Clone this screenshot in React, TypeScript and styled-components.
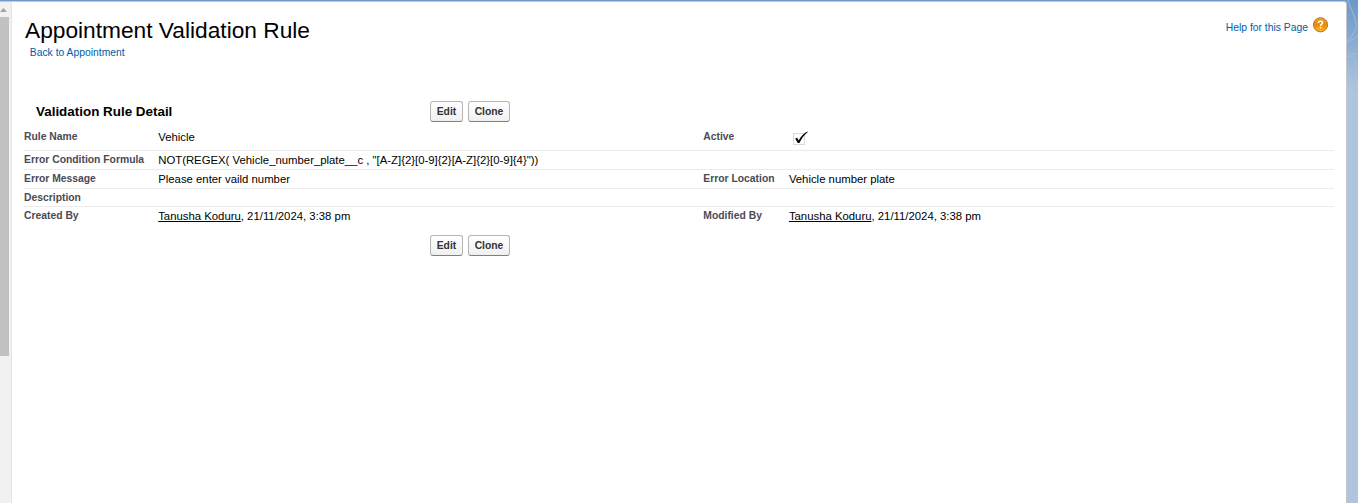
import React from "react";
import styled, { createGlobalStyle } from "styled-components";

const GlobalStyle = createGlobalStyle`
  html, body { margin: 0; padding: 0; overflow: hidden; }
  body { font-family: "Liberation Sans", Arial, sans-serif; font-size: 11.35px; color: #000; }
`;

const Page = styled.div`
  position: relative;
  display: flex;
  width: 1358px;
  height: 503px;
  box-sizing: border-box;
  padding-top: 1px;
  overflow: hidden;
  background: linear-gradient(#6b9ac8 0, #7fa5cf 30px, #afc4df 88px, #b0c4df 100%);
`;

const Backdrop = styled.svg`
  position: absolute;
  right: 0;
  top: 0;
`;

const Scrollbar = styled.div`
  width: 11px;
  flex: none;
  background: #f1f1f1;
  border-top: 1px solid #c0c8d4;
  border-right: 1px solid #e4e4e4;
  box-sizing: content-box;
`;

const ScrollArrow = styled.svg`
  display: block;
  width: 9px;
  height: 15px;
`;

const Thumb = styled.div`
  width: 9px;
  height: 339px;
  background: #c1c1c1;
`;

const Panel = styled.main`
  position: relative;
  width: 1335px;
  flex: none;
  box-sizing: border-box;
  background: #fff;
  border: solid #c5c6cb;
  border-width: 1px 1px 0 0;
  border-radius: 0 3px 0 0;
  padding: 15px 12px 0 12px;
`;

const Header = styled.header`
  display: flex;
  justify-content: space-between;
  height: 83px;
`;

const Title = styled.h1`
  margin: 0 0 0 1px;
  font-size: 22.72px;
  line-height: 27px;
  font-weight: 400;
`;

const Link = styled.a`
  color: #015ba7;
  font-size: 10.35px;
  line-height: 14px;
`;

const BackLink = styled(Link)`
  display: block;
  margin: 2px 0 0 5.8px;
`;

const Help = styled.div`
  display: flex;
  gap: 4px;
  margin-right: 5px;
`;

const HelpLink = styled(Link)`
  padding-top: 4px;
`;

const SectionHeader = styled.div`
  display: flex;
  height: 27px;
`;

const SectionTitle = styled.h2`
  width: 394px;
  margin: 0;
  padding-left: 12px;
  box-sizing: content-box;
  font-size: 13.42px;
  line-height: 23px;
`;

const Buttons = styled.div<{ $footer?: boolean }>`
  display: flex;
  gap: 5px;
  align-items: flex-start;
  padding: ${(p) => (p.$footer ? "10px 0 0 406px" : "1px 0 0")};
`;

const Button = styled.button<{ $width: number }>`
  width: ${(p) => p.$width}px;
  height: 21px;
  box-sizing: border-box;
  padding: 0;
  border: 1px solid #b5b5b5;
  border-bottom-color: #7f7f7f;
  border-radius: 3px;
  background: linear-gradient(#fff, #f0f0f0);
  color: #333;
  font: bold 10.35px/18px "Liberation Sans", Arial, sans-serif;
`;

const Row = styled.div<{ $height: number; $last?: boolean; $first?: boolean }>`
  display: grid;
  grid-template-columns: 134.2px 545.1px 85.6px 1fr;
  height: ${(p) => p.$height}px;
  box-sizing: border-box;
  padding-top: ${(p) => (p.$first ? 1 : 0)}px;
  border-bottom: ${(p) => (p.$last ? "0" : "1px solid #ececec")};
`;

const Label = styled.div`
  padding-top: 2px;
  color: #4a4a56;
  font-size: 10.35px;
  font-weight: bold;
  line-height: 14px;
  white-space: nowrap;
`;

const Value = styled.div`
  padding-top: 2px;
  line-height: 15px;
  white-space: nowrap;
`;

const User = styled.a`
  text-decoration: underline;
`;

const Check = styled.svg`
  display: block;
  margin: 1px 0 0 4.1px;
`;

const Actions = ({ footer }: { footer?: boolean }) => (
  <Buttons $footer={footer}>
    <Button $width={33}>Edit</Button>
    <Button $width={42}>Clone</Button>
  </Buttons>
);

const Stamp = () => (
  <Value>
    <User>Tanusha Koduru</User>, 21/11/2024, 3:38 pm
  </Value>
);

export default function App() {
  return (
    <>
      <GlobalStyle />
      <Page>
        <Backdrop width="14" height="100" fill="none" stroke="#a5c0df" strokeOpacity=".8">
          <path d="M4 0C6 8 12 18 12.5 25C12 33 6 38 2 43M2 45C5 41 10 38 14 36M2 56C5 53 10 53 14 54M2 70C9 71 12 67 12 61C12 57 8 55 2 57M2 79C6 80 10 79 14 80M2 87C7 87 11 89 14 90" />
        </Backdrop>
        <Scrollbar>
          <ScrollArrow viewBox="0 0 9 15">
            <path d="M0 10L3.5 6L7 10Z" fill="#a3a3a3" />
          </ScrollArrow>
          <Thumb />
        </Scrollbar>
        <Panel>
          <Header>
            <div>
              <Title>Appointment Validation Rule</Title>
              <BackLink>Back to Appointment</BackLink>
            </div>
            <Help>
              <HelpLink>Help for this Page</HelpLink>
              <svg width="17" height="17" viewBox="0 0 17 17">
                <defs>
                  <linearGradient id="orb" x1="0" y1="0" x2="0" y2="1">
                    <stop offset="0" stopColor="#eaa43c" />
                    <stop offset=".5" stopColor="#e98a06" />
                    <stop offset="1" stopColor="#f8b62c" />
                  </linearGradient>
                </defs>
                <circle cx="8.5" cy="7.8" r="7.1" fill="url(#orb)" stroke="#b56b13" strokeWidth=".9" />
                <path d="M6.4 6C6.4 3.6 10.6 3.7 10.5 6C10.4 7.4 8.5 7.3 8.5 9" fill="none" stroke="#fff" strokeWidth="1.5" />
                <rect x="7.7" y="9.8" width="1.6" height="1.6" fill="#fff" />
              </svg>
            </Help>
          </Header>
          <SectionHeader>
            <SectionTitle>Validation Rule Detail</SectionTitle>
            <Actions />
          </SectionHeader>
          <Row $height={24} $first>
            <Label>Rule Name</Label>
            <Value>Vehicle</Value>
            <Label>Active</Label>
            <Check width="17" height="17" viewBox="0 0 17 17">
              <rect x=".5" y="4.5" width="11" height="11" fill="none" stroke="#b4b4b4" strokeDasharray="1 1" />
              <path d="M2.2 9.6L4.2 8.8L5.6 11.4C8 7.5 11 4.2 14.4 2.5L14.8 3C11 6.2 8.4 9.8 6.4 13.9L4.8 14Z" fill="#000" />
            </Check>
          </Row>
          <Row $height={19}>
            <Label>Error Condition Formula</Label>
            <Value>{'NOT(REGEX( Vehicle_number_plate__c , "[A-Z]{2}[0-9]{2}[A-Z]{2}[0-9]{4}"))'}</Value>
          </Row>
          <Row $height={19}>
            <Label>Error Message</Label>
            <Value>Please enter vaild number</Value>
            <Label>Error Location</Label>
            <Value>Vehicle number plate</Value>
          </Row>
          <Row $height={18}>
            <Label>Description</Label>
          </Row>
          <Row $height={18} $last>
            <Label>Created By</Label>
            <Stamp />
            <Label>Modified By</Label>
            <Stamp />
          </Row>
          <Actions footer />
        </Panel>
      </Page>
    </>
  );
}
